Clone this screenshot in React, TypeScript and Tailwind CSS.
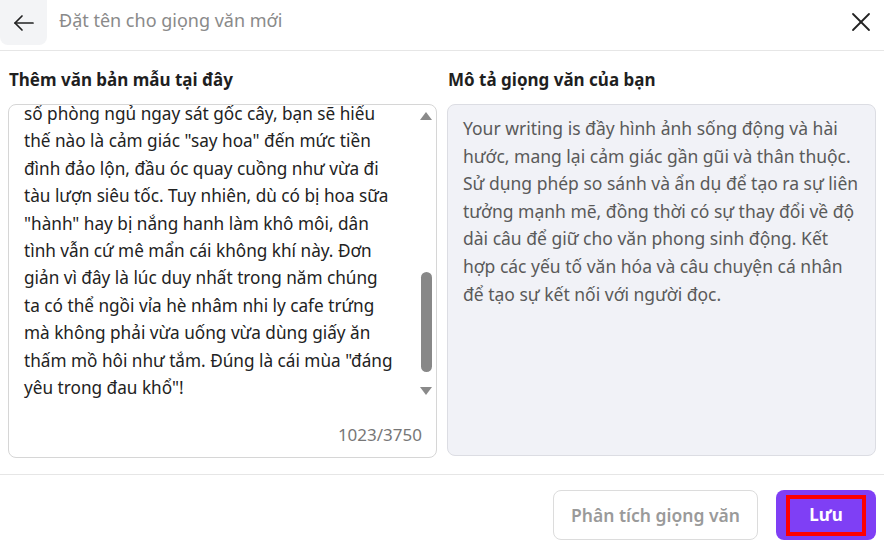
import React from 'react';

const sampleLines = [
  'sổ phòng ngủ ngay sát gốc cây, bạn sẽ hiểu',
  'thế nào là cảm giác "say hoa" đến mức tiền',
  'đình đảo lộn, đầu óc quay cuồng như vừa đi',
  'tàu lượn siêu tốc. Tuy nhiên, dù có bị hoa sữa',
  '"hành" hay bị nắng hanh làm khô môi, dân',
  'tình vẫn cứ mê mẩn cái không khí này. Đơn',
  'giản vì đây là lúc duy nhất trong năm chúng',
  'ta có thể ngồi vỉa hè nhâm nhi ly cafe trứng',
  'mà không phải vừa uống vừa dùng giấy ăn',
  'thấm mồ hôi như tắm. Đúng là cái mùa "đáng',
  'yêu trong đau khổ"!',
];

const description =
  'Your writing is đầy hình ảnh sống động và hài hước, mang lại cảm giác gần gũi và thân thuộc. Sử dụng phép so sánh và ẩn dụ để tạo ra sự liên tưởng mạnh mẽ, đồng thời có sự thay đổi về độ dài câu để giữ cho văn phong sinh động. Kết hợp các yếu tố văn hóa và câu chuyện cá nhân để tạo sự kết nối với người đọc.';

const App: React.FC = () => {
  return (
    <div className="w-[884px] h-[543px] bg-white overflow-hidden font-['Noto_Sans',sans-serif] text-[17px]">
      {/* header */}
      <div className="h-[51px] flex items-start border-b border-[#e6e6e6]">
        <button className="w-[47px] h-[45px] bg-[#f3f4f6] rounded-b-lg flex items-center justify-center">
          <svg width="24" height="24" viewBox="0 0 24 24" fill="none" stroke="#222" strokeWidth="1.7" strokeLinecap="round" strokeLinejoin="round">
            <path d="M21 12H3" />
            <path d="M10 5l-7 7 7 7" />
          </svg>
        </button>
        <div className="ml-[12px] h-[40px] flex items-center text-[18px] text-[#8a8a8a]">Đặt tên cho giọng văn mới</div>
        <button className="ml-auto mr-[12px] mt-[11px] w-[22px] h-[22px] flex items-center justify-center">
          <svg width="20" height="20" viewBox="0 0 20 20" fill="none" stroke="#222" strokeWidth="1.8" strokeLinecap="round">
            <path d="M2 2l16 16" />
            <path d="M18 2L2 18" />
          </svg>
        </button>
      </div>

      {/* body */}
      <div className="grid grid-cols-2 gap-[10px] px-[8px] pt-[17px] pb-[16px] border-b border-[#e6e6e6]">
        <div className="flex flex-col">
          <div className="h-[24px] leading-[24px] font-bold text-[#1f1f1f] pl-[1px] mb-[12px]">Thêm văn bản mẫu tại đây</div>
          <div className="relative h-[354px] border border-[#d6d6d6] rounded-lg flex flex-col">
            <div className="h-[296px] overflow-hidden pl-[15px] pr-[30px]">
              <div className="-mt-[5px] text-[17.2px] leading-[27.4px] text-[#222]">
                {sampleLines.map((l, i) => (
                  <div key={i} className="whitespace-nowrap">{l}</div>
                ))}
              </div>
            </div>
            <div className="mt-auto mb-[10px] pr-[14px] text-right text-[#777] leading-[24px]">1023/3750</div>
            {/* scrollbar */}
            <div className="absolute top-[7px] right-[3px] w-[14px] h-[285px] flex flex-col items-center">
              <div className="w-0 h-0 border-l-[6px] border-r-[6px] border-b-[8px] border-l-transparent border-r-transparent border-b-[#8a8a8a]" />
              <div className="mt-[152px] w-[11px] h-[100px] rounded-full bg-[#888]" />
              <div className="mt-[15px] w-0 h-0 border-l-[6px] border-r-[6px] border-t-[8px] border-l-transparent border-r-transparent border-t-[#8a8a8a]" />
            </div>
          </div>
        </div>
        <div className="flex flex-col">
          <div className="h-[24px] leading-[24px] font-bold text-[#1f1f1f] pl-[1px] mb-[12px]">Mô tả giọng văn của bạn</div>
          <div className="h-[352px] bg-[#f1f2f7] border border-[#dcdde3] rounded-lg pl-[15px] pr-[14px] pt-[10px] text-[17.5px] leading-[27.6px] text-[#5a5a5a]">
            {description}
          </div>
        </div>
      </div>

      {/* footer */}
      <div className="flex justify-end gap-[18px] px-[8px] pt-[15px]">
        <button className="w-[205px] h-[50px] border border-[#dcdcdc] rounded-lg text-[17.5px] text-[#9a9a9a] font-semibold">Phân tích giọng văn</button>
        <button className="w-[100px] h-[50px] bg-[#7f3ff5] rounded-lg flex items-center justify-center">
          <span className="w-[80px] h-[41px] border-[4px] border-[#ff0000] flex items-center justify-center text-white font-bold">Lưu</span>
        </button>
      </div>
    </div>
  );
};

export default App;
